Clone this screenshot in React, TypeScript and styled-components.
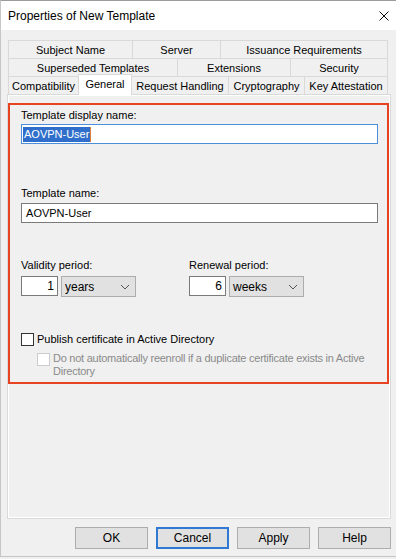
import * as React from 'react';
import styled, { createGlobalStyle } from 'styled-components';

const GlobalStyle = createGlobalStyle`
  body {
    margin: 0;
    background: #f0f0f0;
    font-family: "Liberation Sans", Arial, sans-serif;
    color: #000;
  }
`;

const Window = styled.div`
  width: 396px;
  height: 557px;
  box-sizing: border-box;
  background: #f0f0f0;
  border-top: 1px solid #9c9c9c;
  border-left: 1px solid #c6c6c6;
  border-bottom: 1px solid #c6c6c6;
  display: flex;
  flex-direction: column;
`;

const TitleBar = styled.div`
  height: 29px;
  background: #fff;
  display: flex;
  align-items: center;
  justify-content: space-between;
  padding: 0 7px 0 7px;
  font-size: 12px;
`;

const Body = styled.div`
  flex: 1;
  display: flex;
  flex-direction: column;
  padding: 10px 5px 0 6px;
`;

const Tabs = styled.div`
  margin: 0 3px 0 1px;
  display: flex;
  flex-direction: column;
`;

const TabRow = styled.div`
  display: flex;
  height: 18px;
`;

const Tab = styled.div<{ $w: number; $active?: boolean }>`
  box-sizing: border-box;
  width: ${(p) => p.$w}px;
  border: 1px solid #d9d9d9;
  border-bottom: none;
  border-left: none;
  &:first-child {
    border-left: 1px solid #d9d9d9;
  }
  background: ${(p) => (p.$active ? '#fff' : '#f0f0f0')};
  font-size: 11px;
  display: flex;
  align-items: center;
  justify-content: center;
  white-space: nowrap;
  ${(p) =>
    p.$active &&
    `
    position: relative;
    z-index: 1;
    margin-top: -2px;
    height: 21px;
    margin-bottom: -1px;
    padding-bottom: 3px;
    border-left: 1px solid #d9d9d9;
    margin-left: -1px;
    width: ${p.$w + 1}px;
  `}
`;

const Panel = styled.div`
  flex: 1;
  border: 1px solid #d9d9d9;
  box-shadow: inset 0 0 0 1px #fff;
  background: #f0f0f0;
  padding: 8px 1px 0 0;
`;

const Highlight = styled.div`
  border: 2px solid #e84320;
  padding: 3px 9px 4px 11px;
  font-size: 11px;
`;

const Label = styled.div<{ $gap?: number }>`
  line-height: 15px;
  margin-top: ${(p) => p.$gap || 0}px;
`;

const TextBox = styled.div<{ $focused?: boolean; $gap?: number }>`
  box-sizing: border-box;
  height: 20px;
  margin-top: ${(p) => p.$gap ?? 1}px;
  background: #fff;
  border: 1px solid ${(p) => (p.$focused ? '#4d8fdb' : '#7a7a7a')};
  display: flex;
  align-items: center;
  padding-left: 1px;
  font-size: 11px;
`;

const Selected = styled.span`
  background: #2f6fcb;
  color: #fff;
  padding: 1px 1px 2px 1px;
`;

const Caret = styled.span`
  width: 1px;
  height: 15px;
  background: #d9803a;
`;

const PeriodRow = styled.div`
  display: flex;
  margin-top: 35px;
`;

const PeriodGroup = styled.div<{ $w: number }>`
  width: ${(p) => p.$w}px;
  display: flex;
  flex-direction: column;
`;

const Controls = styled.div`
  display: flex;
  gap: 3px;
  margin-top: 3px;
`;

const NumberBox = styled.div`
  box-sizing: border-box;
  width: 37px;
  height: 20px;
  background: #fff;
  border: 1px solid #7a7a7a;
  text-align: right;
  padding-right: 3px;
  line-height: 18px;
  font-size: 12px;
`;

const Combo = styled.div`
  box-sizing: border-box;
  width: 75px;
  height: 21px;
  background: #e1e1e1;
  border: 1px solid #adadad;
  display: flex;
  align-items: center;
  justify-content: space-between;
  padding: 0 5px 0 3px;
  font-size: 12px;
`;

const CheckRow = styled.div<{ $disabled?: boolean; $indent?: number; $gap?: number }>`
  display: flex;
  align-items: flex-start;
  gap: 3px;
  margin-left: ${(p) => p.$indent || 0}px;
  margin-top: ${(p) => p.$gap || 0}px;
  color: ${(p) => (p.$disabled ? '#8a8a8a' : '#000')};
  line-height: ${(p) => (p.$disabled ? 13 : 15)}px;
`;

const Box = styled.span<{ $disabled?: boolean }>`
  box-sizing: border-box;
  flex: none;
  width: 13px;
  height: 13px;
  margin-top: 1px;
  background: #fff;
  border: 1px solid ${(p) => (p.$disabled ? '#cccccc' : '#333')};
`;

const CheckText = styled.span<{ $tight?: boolean }>`
  white-space: nowrap;
  letter-spacing: ${(p) => (p.$tight ? '-0.25px' : '0')};
`;

const Footer = styled.div`
  height: 37px;
  display: flex;
  justify-content: flex-end;
  gap: 8px;
  padding-top: 8px;
  box-sizing: border-box;
`;

const Button = styled.button<{ $default?: boolean }>`
  box-sizing: border-box;
  width: 73px;
  height: 22px;
  background: #e1e1e1;
  border: ${(p) => (p.$default ? '2px solid #2f78d4' : '1px solid #adadad')};
  font-family: "Liberation Sans", Arial, sans-serif;
  font-size: 12px;
  color: #000;
  padding: 0;
`;

function Chevron() {
  return (
    <svg width="10" height="6" viewBox="0 0 10 6">
      <path d="M1 1 L5 5 L9 1" fill="none" stroke="#555" strokeWidth="1" />
    </svg>
  );
}

function CloseIcon() {
  return (
    <svg width="10" height="10" viewBox="0 0 10 10">
      <path d="M0.5 0.5 L9.5 9.5 M9.5 0.5 L0.5 9.5" stroke="#111" strokeWidth="1" />
    </svg>
  );
}

const tabRows = [
  [
    { label: 'Subject Name', w: 125 },
    { label: 'Server', w: 88 },
    { label: 'Issuance Requirements', w: 167 },
  ],
  [
    { label: 'Superseded Templates', w: 170 },
    { label: 'Extensions', w: 113 },
    { label: 'Security', w: 97 },
  ],
  [
    { label: 'Compatibility', w: 71 },
    { label: 'General', w: 53, active: true },
    { label: 'Request Handling', w: 97 },
    { label: 'Cryptography', w: 76 },
    { label: 'Key Attestation', w: 83 },
  ],
];

export default function App() {
  return (
    <>
      <GlobalStyle />
      <Window>
        <TitleBar>
          <span>Properties of New Template</span>
          <CloseIcon />
        </TitleBar>
        <Body>
          <Tabs>
            {tabRows.map((row, i) => (
              <TabRow key={i}>
                {row.map((t) => (
                  <Tab key={t.label} $w={t.w} $active={(t as any).active}>
                    {t.label}
                  </Tab>
                ))}
              </TabRow>
            ))}
          </Tabs>
          <Panel>
            <Highlight>
              <Label>Template display name:</Label>
              <TextBox $focused>
                <Selected>AOVPN-User</Selected>
                <Caret />
              </TextBox>

              <Label $gap={42}>Template name:</Label>
              <TextBox $gap={2}>&nbsp;AOVPN-User</TextBox>

              <PeriodRow>
                <PeriodGroup $w={168}>
                  <Label>Validity period:</Label>
                  <Controls>
                    <NumberBox>1</NumberBox>
                    <Combo>
                      years
                      <Chevron />
                    </Combo>
                  </Controls>
                </PeriodGroup>
                <PeriodGroup $w={120}>
                  <Label>Renewal period:</Label>
                  <Controls>
                    <NumberBox>6</NumberBox>
                    <Combo>
                      weeks
                      <Chevron />
                    </Combo>
                  </Controls>
                </PeriodGroup>
              </PeriodRow>

              <CheckRow $gap={35}>
                <Box />
                <CheckText>Publish certificate in Active Directory</CheckText>
              </CheckRow>
              <CheckRow $disabled $indent={16} $gap={5}>
                <Box $disabled />
                <CheckText $tight>
                  Do not automatically reenroll if a duplicate certificate exists in Active
                  <br />
                  Directory
                </CheckText>
              </CheckRow>
            </Highlight>
          </Panel>
          <Footer>
            <Button>OK</Button>
            <Button $default>Cancel</Button>
            <Button>Apply</Button>
            <Button>Help</Button>
          </Footer>
        </Body>
      </Window>
    </>
  );
}
